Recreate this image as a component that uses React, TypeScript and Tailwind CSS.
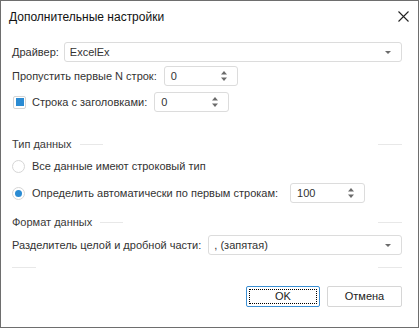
const font = { fontFamily: '"Liberation Sans", Arial, sans-serif' };

function Arrow() {
  return (
    <svg width="6" height="3" viewBox="0 0 6 3" className="shrink-0">
      <path d="M0 0h6L3 3z" fill="#6b6b6b" />
    </svg>
  );
}

function Select({ value }: { value: string }) {
  return (
    <div className="flex-1 h-[20px] border border-[#dcdcdc] rounded-[3px] bg-white flex items-center pl-[5px] pr-[10px]">
      <span className="flex-1">{value}</span>
      <Arrow />
    </div>
  );
}

function Spin({ value, w }: { value: string; w: string }) {
  return (
    <div className={`${w} h-[20px] border border-[#dcdcdc] rounded-[3px] bg-white flex items-center pl-[6px] pr-[10px]`}>
      <span className="flex-1">{value}</span>
      <svg width="6" height="10" viewBox="0 0 6 10">
        <path d="M3 0L6 3.5H0z" fill="#6b6b6b" />
        <path d="M0 6.5h6L3 10z" fill="#6b6b6b" />
      </svg>
    </div>
  );
}

function Group({ title }: { title: string }) {
  return (
    <div className="flex items-center h-[14px]">
      <span className="text-[#3a3a3a]">{title}</span>
      <div className="ml-[8px] w-[23px] h-px bg-[#e8e8e8]" />
      <div className="flex-1" />
      <div className="w-[24px] h-px bg-[#e8e8e8]" />
    </div>
  );
}

function Radio({ on }: { on?: boolean }) {
  return (
    <div className="w-[13px] h-[13px] rounded-full border border-[#d6d6d6] bg-white flex items-center justify-center shrink-0">
      {on && <div className="w-[7px] h-[7px] rounded-full bg-[#2a8bd3]" />}
    </div>
  );
}

export default function App() {
  return (
    <div
      style={font}
      className="w-[419px] h-[328px] border border-[#6e6e6e] bg-white text-[11px] text-[#333] flex flex-col"
    >
      <div className="h-[31px] flex items-center pl-[8px] pr-[9px]">
        <span className="flex-1 text-[12px] text-[#111]">Дополнительные настройки</span>
        <svg width="11" height="11" viewBox="0 0 11 11">
          <path d="M0.5 0.5l10 10M10.5 0.5l-10 10" stroke="#222" strokeWidth="1.1" />
        </svg>
      </div>

      <div className="pl-[11px] pr-[16px] flex flex-col">
        <div className="mt-[10px] flex items-center h-[20px] gap-[5px]">
          <span>Драйвер:</span>
          <Select value="ExcelEx" />
        </div>

        <div className="mt-[4px] flex items-center h-[20px] gap-[7px]">
          <span>Пропустить первые N строк:</span>
          <Spin value="0" w="w-[74px]" />
        </div>

        <div className="mt-[6px] flex items-center h-[20px]">
          <div className="w-[13px] h-[13px] ml-[1px] border border-[#d4d4d4] rounded-[2px] bg-white flex items-center justify-center">
            <div className="w-[8px] h-[8px] bg-[#2a8bd3]" />
          </div>
          <span className="ml-[6px]">Строка с заголовками:</span>
          <div className="ml-[7px]">
            <Spin value="0" w="w-[75px]" />
          </div>
        </div>

        <div className="mt-[25px]">
          <Group title="Тип данных" />
        </div>

        <div className="mt-[5px] flex items-center h-[20px] gap-[7px]">
          <Radio />
          <span>Все данные имеют строковый тип</span>
        </div>

        <div className="mt-[7px] flex items-center h-[20px] gap-[7px]">
          <Radio on />
          <span>Определить автоматически по первым строкам:</span>
          <div className="ml-[5px]">
            <Spin value="100" w="w-[75px]" />
          </div>
        </div>

        <div className="mt-[12px]">
          <Group title="Формат данных" />
        </div>

        <div className="mt-[6px] flex items-center h-[20px] gap-[7px]">
          <span>Разделитель целой и дробной части:</span>
          <Select value=", (запятая)" />
        </div>

        <div className="mt-[12px] flex h-px">
          <div className="w-[24px] bg-[#e8e8e8]" />
          <div className="flex-1" />
          <div className="w-[24px] bg-[#e8e8e8]" />
        </div>

        <div className="mt-[18px] flex justify-end gap-[7px]">
          <button className="w-[74px] h-[21px] border border-[#3b8fd3] rounded-[2px] bg-white p-[2px]">
            <div className="w-full h-full border border-dotted border-black flex items-center justify-center text-[#222]">
              OK
            </div>
          </button>
          <button className="w-[75px] h-[21px] border border-[#d6d6d6] rounded-[2px] bg-white text-[#222] flex items-center justify-center">
            Отмена
          </button>
        </div>
      </div>
    </div>
  );
}
